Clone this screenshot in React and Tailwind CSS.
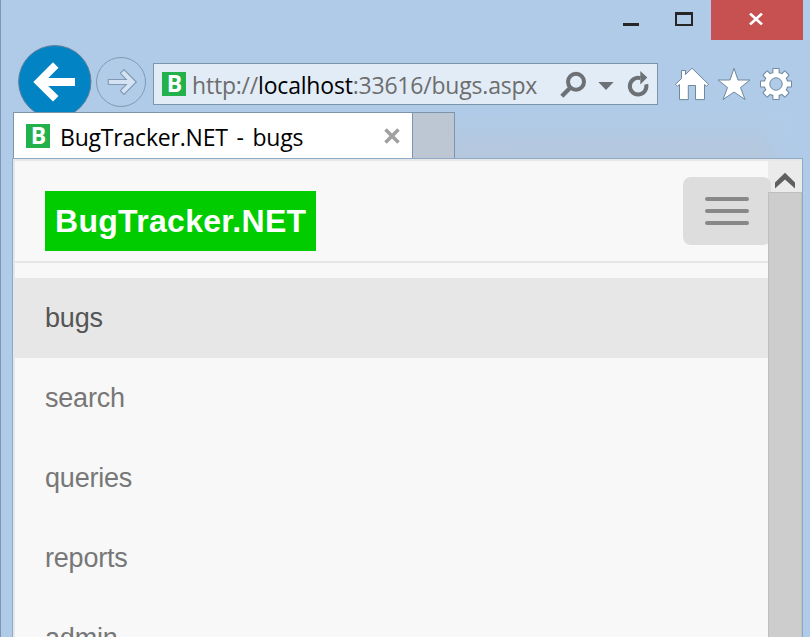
const menuItems = ["bugs", "search", "queries", "reports", "admin"];

function Favicon() {
  return (
    <span className="flex h-6 w-6 shrink-0 items-center justify-center bg-[#22b14c] pl-px font-['Open_Sans',sans-serif] text-[23px] leading-[22px] font-bold text-white">
      <span className="-mt-[2px]">B</span>
    </span>
  );
}

function TitleBar() {
  return (
    <div className="flex h-10 shrink-0 justify-end pr-[7px]">
      <div className="mt-[23px] mr-9 h-[3px] w-4 bg-[#262626]" />
      <div className="mt-3 mr-[18px] h-[14px] w-[18px] border-2 border-t-[3px] border-[#262626]" />
      <div className="flex w-[92px] justify-center bg-[#c75050] pt-[13px] pr-[2px]">
        <svg width="14" height="12" viewBox="0 0 14 12">
          <path d="M1 0.5L13 11.5M13 0.5L1 11.5" stroke="#fff" strokeWidth="2.6" />
        </svg>
      </div>
    </div>
  );
}

const gearTeeth = "M-2.6 -15H2.6V15H-2.6ZM-15 -2.6H15V2.6H-15Z";

function Gear() {
  return (
    <g transform="translate(776 84)">
      <g fill="#6f879f" stroke="#6f879f" strokeWidth="2" strokeLinejoin="round">
        <path d={gearTeeth} />
        <path d={gearTeeth} transform="rotate(45)" />
        <circle r="11.3" />
      </g>
      <g fill="#fff">
        <path d={gearTeeth} />
        <path d={gearTeeth} transform="rotate(45)" />
        <circle r="11.3" />
      </g>
      <circle r="6.2" fill="#b0cbe8" stroke="#6f879f" />
    </g>
  );
}

function NavBar() {
  return (
    <div className="flex h-[72px] shrink-0 items-start overflow-hidden pl-[17px]">
      <svg className="mt-1 shrink-0" width="76" height="76" viewBox="17 44 76 76">
        <circle cx="54.8" cy="81.7" r="36.2" fill="#0284c4" stroke="#64809b" strokeWidth="1" />
        <path d="M33.3 82L53 62.3L58.5 67.7L48.3 78H75V86H48.3L58.5 96L53 101.5Z" fill="#fff" />
      </svg>
      <svg className="mt-4 ml-[2px] shrink-0" width="52" height="52" viewBox="95 56 52 52">
        <circle cx="121" cy="82" r="24.5" fill="#b1cce9" stroke="#8199b2" strokeWidth="1" />
        <path d="M136.3 82L124 69.5L120.3 73.3L126.3 79.5H108.3V84.5H126.3L120.3 90.7L124 94.5Z" fill="#d4e3f3" stroke="#8199b2" strokeWidth="1.1" />
      </svg>
      <div className="mt-[23px] ml-[6px] flex h-[42px] w-[505px] shrink-0 items-center border border-[#7c94ac] bg-[#e2ecf7] pl-2">
        <Favicon />
        <div className="ml-[6px] w-[364px] shrink-0 pt-[2px] font-['Open_Sans',sans-serif] text-[23px] tracking-[-0.2px] whitespace-nowrap text-[#6d6d6d]">
          http://<span className="text-black">localhost</span>:33616/bugs.aspx
        </div>
        <svg className="shrink-0" width="94" height="40" viewBox="556 64 94 40">
          <circle cx="576" cy="81.8" r="8" fill="none" stroke="#6d7175" strokeWidth="4" />
          <path d="M570.5 87.5L561.8 96.2" stroke="#6d7175" strokeWidth="4.4" />
          <path d="M598.3 82H613.7L606 90Z" fill="#6d7175" />
          <path d="M640.5 78.2A8.3 8.3 0 1 0 646.2 84.2" fill="none" stroke="#6d7175" strokeWidth="4" />
          <path d="M640.3 71L647.3 77.6L640.3 84.5Z" fill="#6d7175" />
        </svg>
      </div>
      <svg className="mt-[26px] ml-4 shrink-0" width="120" height="36" viewBox="674 66 120 36">
        <g fill="#fff" stroke="#6f879f" strokeWidth="1" strokeLinejoin="round">
          <path d="M692 68.2L708.5 84.3L706.5 86.3L704.5 84.6V99.6H695.5V85.5H688.3V99.6H679.5V84.6L677.5 86.3L675.5 84.3L681.5 78.5V70.5H685.5V74.5Z" />
          <path d="M734 68.3L738 80H750L740.5 87.5L745 99.5L734 92L723 99.5L727.5 87.5L718 80H730Z" />
        </g>
        <Gear />
      </svg>
    </div>
  );
}

function TabStrip() {
  return (
    <div className="flex h-[46px] shrink-0 pr-[18px] pl-[13px]">
      <div className="flex w-[400px] items-center border border-b-0 border-[#7c94ac] bg-white pt-px pl-3">
        <Favicon />
        <span className="ml-[10px] w-[324px] pt-[2px] font-['Open_Sans',sans-serif] text-[23px] tracking-[-0.2px] [word-spacing:3px] whitespace-nowrap text-black">
          BugTracker.NET - bugs
        </span>
        <svg width="16" height="16" viewBox="0 0 16 16">
          <path d="M1.5 1.5L14.5 14.5M14.5 1.5L1.5 14.5" stroke="#a0a0a0" strokeWidth="3.6" />
        </svg>
      </div>
      <div className="w-[42px] border-t border-r border-[#7c94ac] bg-[#bdc7d4]" />
      <div className="flex flex-1 bg-linear-to-b from-[#b0cbe8] to-[#b5c7dc]">
        <div className="ml-auto w-9 bg-linear-to-r from-[#b0cbe800] to-[#b0cbe8]" />
      </div>
    </div>
  );
}

function SiteHeader() {
  return (
    <header className="flex h-[102px] items-start justify-between border-b-2 border-[#e7e7e7] pl-[30px]">
      <div className="mt-[30px] flex h-[60px] w-[271px] items-center bg-[#00cc00] pl-[10px] text-[32px] font-bold tracking-[0.3px] text-white">
        BugTracker.NET
      </div>
      <div className="mt-4 -mr-[3px] flex h-[68px] w-[88px] flex-col gap-2 rounded-lg bg-[#ddd] pt-5 pl-[22px]">
        <div className="h-1 w-11 rounded-[2px] bg-[#888]" />
        <div className="h-1 w-11 rounded-[2px] bg-[#888]" />
        <div className="h-1 w-11 rounded-[2px] bg-[#888]" />
      </div>
    </header>
  );
}

function Scrollbar() {
  return (
    <div className="flex w-[34px] shrink-0 flex-col">
      <div className="h-[31px] bg-[#ebebeb]">
        <svg width="34" height="31" viewBox="768 161 34 31">
          <path d="M775 182.5L785 172.7L795 182.5V188.4L785 179.4L775 188.4Z" fill="#606060" />
        </svg>
      </div>
      <div className="relative z-20 flex-1 border border-b-0 border-[#bfbfbf] bg-[#cdcdcd]" />
    </div>
  );
}

export default function App() {
  return (
    <div className="flex h-[637px] w-[810px] flex-col overflow-hidden border-l border-[#8093b4] bg-[#b0cbe8] font-['Liberation_Sans',Arial,sans-serif]">
      <div className="-ml-px flex flex-1 flex-col overflow-hidden">
        <TitleBar />
        <NavBar />
        <TabStrip />
        <div className="ml-3 flex w-[791px] flex-1 overflow-hidden border border-b-0 border-[#8faac5] bg-[#f8f8f8]">
          <div className="flex flex-1 border-t-2 border-l-2 border-[#e7e7e7]">
            <main className="relative z-10 h-[476px] w-[753px] shrink-0">
              <SiteHeader />
              <nav className="pt-[15px]">
                {menuItems.map((item, i) => (
                  <div
                    key={item}
                    className={
                      i === 0
                        ? "flex h-20 items-center bg-[#e7e7e7] pl-[30px] text-[27px] tracking-[-0.2px] text-[#555]"
                        : "flex h-20 items-center pl-[30px] text-[27px] tracking-[-0.2px] text-[#777]"
                    }
                  >
                    {item}
                  </div>
                ))}
              </nav>
            </main>
            <Scrollbar />
          </div>
        </div>
      </div>
    </div>
  );
}
